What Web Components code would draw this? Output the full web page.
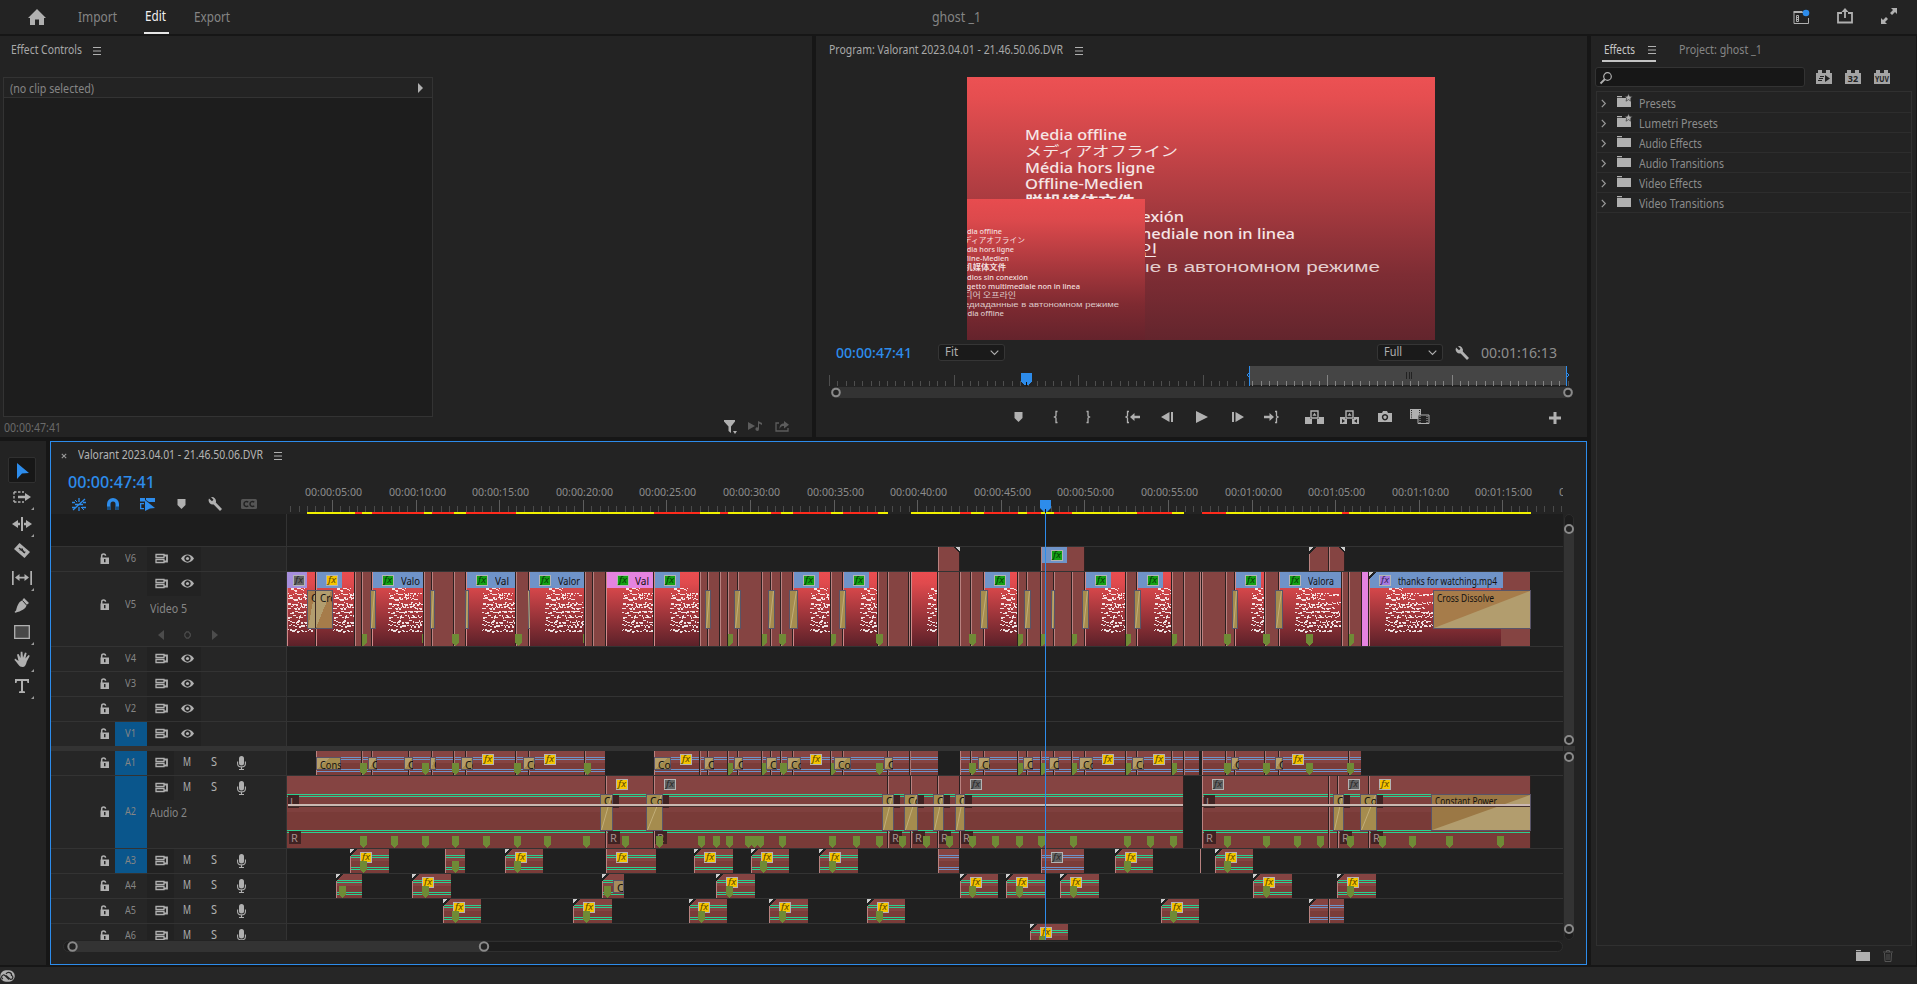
<!DOCTYPE html>
<html lang="en">
<head>
<meta charset="utf-8">
<title>ghost _1</title>
<style>
html,body{margin:0;height:100%;background:#161616;overflow:hidden}
body{font-family:"Noto Sans","Noto Sans CJK JP",sans-serif;color:#a8a8a8;font-size:12px}
</style>
</head>
<body>
<editor-app></editor-app>
<script>
const FONT = '"Noto Sans","Noto Sans CJK JP",sans-serif';
const BASE = '<style>*{box-sizing:border-box}:host{display:block}.bar{display:flex;align-items:center}svg{display:block;flex:none}</style>';
function define(name, render, after) {
  customElements.define(name, class extends HTMLElement {
    connectedCallback() {
      if (this.shadowRoot) return;
      this.attachShadow({mode: 'open'}).innerHTML = BASE + render(this);
      if (after) after(this);
    }
  });
}

/* ---- label: one line of text condensed to a set width ---- */
define('ui-text', el => `<style>:host{flex:none;height:1.4em;line-height:1.4em;width:${el.getAttribute('w')}px;font-size:${el.getAttribute('size') || 12}px}
span{display:inline-block;white-space:pre;transform-origin:0 50%}</style><span><slot></slot></span>`,
  el => {
    const s = el.shadowRoot.querySelector('span');
    const w = s.getBoundingClientRect().width;
    if (w) s.style.transform = `scaleX(${(+el.getAttribute('w') / w).toFixed(4)})`;
  });
const T = (w, size, txt, color) => `<ui-text w="${w}" size="${size}"${color ? ` style="color:${color}${color === '#2d8ceb' ? ';font-weight:500' : ''}"` : ''}>${txt}</ui-text>`;

/* ---- icons ---- */
const C = '#b0b0b0', B = '#2d8ceb';
const film = '<path d="M1 1.500h8v3H1zM1 6.500h8v3H1z" fill="none" stroke="#b0b0b0" stroke-width="1.300"/><path d="M9 2.500h3v6H9" fill="none" stroke="#b0b0b0" stroke-width="1.800"/>';
const folder = '<path d="M0 1h5v1.200H0zM0 3h14v9H0z"/>';
const brick = t => `<path d="M0 3h2V0h4v3h4V0h4v3h2v11H0z" fill="#a4a4a4"/>${t}`;
const icons = {
  home: [18, 16, '<path d="M9 0 18 9h-2v7h-5v-5.500H7V16H2V9H0z"/>'],
  menu: [9, 8, '<path d="M0 .5h8M0 4h8M0 7.500h8" stroke="#b0b0b0"/>'],
  workspace: [18, 16, '<path d="M1 3.500v11h14.500V9M1 3.500h9" fill="none" stroke="#b0b0b0"/><path d="M.5 2h9v2h-9z"/><path d="M3.500 6.500h2v6h-2z" fill="none" stroke="#b0b0b0"/><path d="M4 8.500h2M4 10.500h2" stroke="#b0b0b0"/><circle cx="13" cy="4" r="3.300" fill="#2d8ceb"/>'],
  share: [16, 16, '<path d="M5 5H1v9.500h14V5h-4" fill="none" stroke="#b0b0b0" stroke-width="1.800"/><path d="M8 10V3" stroke="#b0b0b0" stroke-width="1.800"/><path d="m8 0 3.500 4h-7z"/>'],
  expand: [16, 16, '<path d="M10 0h6v6l-2-2-3 3-2-2 3-3zM0 10l2 2 3-3 2 2-3 3 2 2H0z"/>'],
  right: [5, 10, '<path d="m0 0 5 5-5 5z"/>'],
  filter: [13, 14, '<path d="M0 0h11v1.500L7 6.500V13L4.500 11V6.500L0 1.500z"/><path d="m9 11 4 0-2 3z"/>'],
  playnote: [16, 12, '<path d="m0 2 7 4-7 4z" fill="#5c5c5c"/><path d="M10 9V1l4 2v2l-3-1.500V9a1.800 1.800 0 1 1-1-1.500" fill="#5c5c5c"/>'],
  exportclip: [15, 12, '<path d="M4 3H1v8h12V8" fill="none" stroke="#5c5c5c" stroke-width="1.300"/><path d="M4.500 9C4.500 5 6 3.500 9 3.500V1l5 3.800-5 3.700V6C7 6 5.500 6.500 4.500 9z" fill="#5c5c5c"/>'],
  caret: [9, 5, '<path d="m.7.700 3.800 3.800L8.300.7" fill="none" stroke="#b0b0b0" stroke-width="1.100"/>'],
  wrench: [14, 14, '<path d="M1 1.500 4 4.200l1.500-1.500L3 0a4.300 4.300 0 0 1 4.800 5.500L14 12l-2 2-6.300-6.500A4.300 4.300 0 0 1 1 1.500z"/>'],
  marker: [9, 10, '<path d="M.5 0h8v6l-4 4-4-4z"/>'],
  inb: [5, 12, '<path d="M4.500.5H3V5L1.500 6 3 7v4.500h1.500" fill="none" stroke="#b0b0b0" stroke-width="1.300"/>'],
  outb: [5, 12, '<path d="M.5.500H2V5l1.500 1L2 7v4.500H.5" fill="none" stroke="#b0b0b0" stroke-width="1.300"/>'],
  goin: [15, 12, '<path d="M4 .5H2.500V5L1 6l1.500 1v4.500H4" fill="none" stroke="#b0b0b0" stroke-width="1.300"/><path d="m5 6 4.500-4v2.800H15v2.400H9.500V10z"/>'],
  goout: [15, 12, '<path d="M11 .5h1.500V5L14 6l-1.500 1v4.500H11" fill="none" stroke="#b0b0b0" stroke-width="1.300"/><path d="M10 6 5.500 2v2.800H0v2.400h5.500V10z"/>'],
  back: [12, 10, '<path d="M8.500 0v10L0 5zM10 0h2v10h-2z"/>'],
  play: [12, 12, '<path d="m0 0 12 6-12 6z"/>'],
  fwd: [12, 10, '<path d="M3.500 0v10L12 5zM0 0h2v10H0z"/>'],
  lift: [19, 14, '<path d="M0 7h5v2h2v5H0zM19 7h-5v2h-2v5h7z"/><path d="M6 1h7v7H6z" fill="none" stroke="#b0b0b0" stroke-width="1.400"/><path d="m9.500 2.800 2 3h-4z"/>'],
  extract: [19, 14, '<path d="M0 7h5v2h2v5H0zM19 7h-5v2h-2v5h7z"/><path d="M6 1h7v7H6z" fill="none" stroke="#b0b0b0" stroke-width="1.400"/><path d="m9.500 2.800 2 3h-4z"/><path d="M2 9v4l3-2zM17 9v4l-3-2z" fill="#232323"/>'],
  camera: [14, 11, '<path fill-rule="evenodd" d="M0 2h4l1-2h4l1 2h4v9H0zM7 3a3.200 3.200 0 1 0 .01 0zm0 1.500a1.700 1.700 0 1 1-.01 0z"/>'],
  compare: [20, 15, '<path d="M0 0h11v10H0z"/><path d="M1.500 1v9M9.500 1v9" stroke="#232323" stroke-dasharray="1 1.200"/><path d="M8 6h11v8.500H8z" fill="#232323" stroke="#b0b0b0"/><path d="M10 7v7M17 7v7" stroke="#b0b0b0" stroke-dasharray="1 1"/>'],
  plus: [12, 12, '<path d="M4.500 0h3v4.500H12v3H7.500V12h-3V7.500H0v-3h4.500z"/>'],
  search: [12, 12, '<circle cx="7.500" cy="4.500" r="3.800" fill="none" stroke="#b0b0b0" stroke-width="1.200"/><path d="m5 7-4.500 4.500" stroke="#b0b0b0" stroke-width="1.800"/>'],
  b1: [16, 14, brick('<path d="m9 5 5 3.500L9 12z" fill="#222"/><path d="M4 6.500h4M3 8.500h4M2 10.500h4" stroke="#222"/>')],
  b2: [16, 14, brick(`<text x="8" y="12" font-size="9" font-weight="700" fill="#222" text-anchor="middle">32</text>`)],
  b3: [16, 14, brick(`<text x="8" y="11.800" font-size="8" font-weight="700" fill="#222" textLength="14" lengthAdjust="spacingAndGlyphs" text-anchor="middle">YUV</text>`)],
  chev: [5, 9, '<path d="m.8.800 3.500 3.700L.8 8.200" fill="none" stroke="#999" stroke-width="1.200"/>'],
  folder: [15, 13, folder],
  preset: [15, 13, folder + '<path d="m11.500-1.500 1.100 2.700 2.900.2-2.200 1.900.7 2.900-2.500-1.600-2.500 1.600.7-2.900-2.200-1.900 2.900-.2z" stroke="#232323" stroke-width=".6"/>'],
  trash: [10, 12, '<path d="M0 2h10M3.500 2V.5h3V2M1.500 3l.5 8.500h6L8.500 3M4 4v6M6 4v6" fill="none" stroke="#555"/>'],
  select: [12, 16, '<path d="m0 0 12 10-7 .5L0 16z" fill="#2d8ceb"/>'],
  trackfwd: [18, 12, '<path d="M1 1h10M1 11h10M1 1v10" fill="none" stroke="#b0b0b0" stroke-width="1.400" stroke-dasharray="2.500 1.500"/><path d="M5 4.800h7V2l6 4-6 4V7.200H5z"/>'],
  ripple: [20, 14, '<path d="M9 0h2v14H9zM0 7l6-4v2.800h2v2.400H6V11zM20 7l-6-4v2.800h-2v2.400h2V11z"/>'],
  razor: [16, 15, '<path d="m5.500 0 10.500 9-5.500 6L0 6z"/><path d="m5 5 6 5" stroke="#232323" stroke-width="1.500"/><path d="m6 7.500 2-2 2 4 1-1" stroke="#232323" fill="none"/>'],
  slip: [20, 14, '<path d="M0 0h1.700v14H0zM18.300 0H20v14h-1.700zM3 6.500 7.500 3v2.700h5V3L17 6.500 12.500 10V7.500h-5V10z"/>'],
  pen: [16, 16, '<path d="m10 1 5 5-2.500 2C12 12 7 14 1.500 15.800L.5 15l5-5A1.200 1.200 0 1 1 6.500 11l-5 5C3 9 4.500 5 8 3.500z"/><path d="m8.500 3.500 4 4.500" stroke="#232323"/>'],
  rect: [16, 14, '<path d="M.7.700h14.600v12.600H.7z" fill="#484848" stroke="#b0b0b0" stroke-width="1.300"/>'],
  hand: [16, 16, '<path d="M1 7.500 4.500 10 3 3.500l1.600-.5L6.500 7 6.700.8h1.700L9 6.800l2-5.300 1.600.5-1.200 5.600L14.500 4l1.300.8-3 5.700C12 14 11 16 8.500 16 5 16 4 12.500.5 9z"/>'],
  type: [14, 14, '<path d="M0 0h14v4h-1.500L12 2H8v10l2 .5V14H4v-1.500l2-.5V2H2l-.5 2H0z"/>'],
  corner: [3, 3, '<path d="M3 0v3H0z" fill="#999"/>'],
  x: [6, 6, '<path d="m.8.800 4.400 4.400m0-4.400L.8 5.200" stroke="#999" stroke-width="1.100"/>'],
  nest: [14, 13, '<path d="M7 0v4M7 9v4M0 4.500h3M11 4.500h3M0 9.500h4M10 9.500h4M1 12 13 1M3 6.500h8" stroke="#2d8ceb" stroke-width="1.300"/><path d="m3 2 2 2M9 9l3 3" stroke="#2d8ceb"/>'],
  magnet: [12, 12, '<path d="M0 12V6a6 6 0 0 1 12 0v6H8.500V6a2.500 2.500 0 0 0-5 0v6z" fill="#2d8ceb"/><path d="M0 8.500h3.500V12H0zM8.500 8.500H12V12H8.500z" fill="#195083"/>'],
  linked: [15, 13, '<path d="M0 0h5v3.500H0zM6 0h9v4H9L6 2zM0 5h4v1.300H1.300V10H4v1.300H0zM5 2l10 8-5 .5L5 13z" fill="#2d8ceb"/>'],
  cc: [16, 10, '<rect width="16" height="10" rx="1.500" fill="#555"/><path d="M7.200 3.300C6 2 3 2.300 3 5s3 3 4.200 1.700M13.200 3.300C12 2 9 2.300 9 5s3 3 4.200 1.700" fill="none" stroke="#222" stroke-width="1.500"/>'],
  lock: [9, 11, '<path fill-rule="evenodd" d="M.5 4.500H9V11H.5zM4 6h1.500v3.200H4z"/><path d="M1.700 5V2.700C1.700.3 5.500.3 5.500 2.700" fill="none" stroke="#b0b0b0" stroke-width="1.500"/>'],
  sync: [13, 11, film],
  eye: [13, 9, '<path fill-rule="evenodd" d="M0 4.500C3-1 10-1 13 4.500 10 10 3 10 0 4.500zM6.500 1.300a3.200 3.200 0 1 0 .01 0z"/><circle cx="6.500" cy="4.500" r="1.600"/>'],
  mic: [9, 14, '<rect x="2" width="5" height="9.500" rx="2.500"/><path d="M.6 5.500v2.200c0 4.200 7.800 4.200 7.800 0V5.500M4.500 11v3M2 13.500h5" fill="none" stroke="#b0b0b0" stroke-width="1.100"/>'],
  prevk: [6, 10, '<path d="M6 0v10L0 5z" fill="#4c4c4c"/>'],
  nextk: [6, 10, '<path d="M0 0v10l6-5z" fill="#4c4c4c"/>'],
  key: [7, 8, '<path d="M2.500.8h2L6.300 3v2L4.500 7.200h-2L.8 5V3z" fill="none" stroke="#4c4c4c" stroke-width="1.200"/>'],
  cloud: [15, 12, '<rect x=".3" y=".3" width="14.400" height="11.400" rx="5.500" fill="#b0b0b0"/><path d="M3 9C0 7.500 2.500 3.500 5 5.500l4 4M6 4c2-3 6-1 5.500 1.500 2 .3 2 4-1 4L6 5.500" fill="none" stroke="#262626" stroke-width="1.200"/>'],
};
define('ui-icon', el => {
  const [w, h, c] = icons[el.getAttribute('name')];
  return `<style>:host{flex:none;width:${w}px;height:${h}px}svg{overflow:visible;fill:${C};font-family:"Noto Sans",sans-serif}</style><svg width="${w}" height="${h}" viewBox="0 0 ${w} ${h}">${c}</svg>`;
});
const I = n => `<ui-icon name="${n}"></ui-icon>`;
/* a flex row: each item is [x, width, html], spaced by margins from the row's origin */
const bar = (origin, h, items, style = '') => {
  let at = origin;
  return `<div class="bar" style="height:${h}px;${style}">` + items.map(([x, w, html, st]) => {
    const m = x - at; at = x + w;
    return `<div style="flex:none;width:${w}px;margin-left:${m}px;${st || ''}">${html}</div>`;
  }).join('') + '</div>';
};

/* ---- top bar ---- */
define('top-bar', () => `<style>:host{background:#232323;height:34px}</style>` + bar(0, 34, [
  [28, 18, I('home')], [78, 39, T(39, 14, 'Import', '#858585'), 'padding-bottom:1px'],
  [144, 25, `<div style="padding:6px 0 0 1px;height:34px;border-bottom:2px solid #e6e6e6">${T(21, 14, 'Edit', '#f0f0f0')}</div>`],
  [194, 36, T(36, 14, 'Export', '#858585'), 'padding-bottom:1px'], [932, 49, T(49, 14, 'ghost _1', '#858585'), 'padding-bottom:1px'],
  [1793, 18, I('workspace')], [1837, 16, I('share'), 'margin-top:-3px'], [1881, 16, I('expand'), 'margin-top:-3px']]));

/* ---- effect controls ---- */
define('effect-controls', () => `<style>:host{background:#232323}
.box{margin:15px 0 0 3px;width:430px;height:340px;border:1px solid #333;background:#1d1d1d}</style>` +
  bar(0, 26, [[11, 71, T(71, 12, 'Effect Controls')], [93, 9, I('menu')]], 'padding-top:3px') +
  `<div class="box">${bar(4, 20, [[10, 84, T(84, 12, '(no clip selected)', '#858585'), 'padding-top:3px'], [418, 5, I('right')]], 'background:#232323;border-bottom:1px solid #333')}</div>` +
  bar(0, 20, [[4, 57, T(57, 12, '00:00:47:41', '#6a6a6a'), 'padding-top:2px'], [724, 13, I('filter')], [748, 16, I('playnote'), 'margin-top:-2px'], [775, 15, I('exportclip'), 'margin-top:-2px']]));

/* ---- program monitor ---- */
const lines = ['Media offline', 'メディアオフライン', 'Média hors ligne', 'Offline-Medien', '脱机媒体文件', 'Medios sin conexión', 'Oggetto multimediale non in linea', '미디어 오프라인', 'Медиаданные в автономном режиме'];
const st = (x, y, w, size, t, fill, extra = '') => `<text x="${x}" y="${y}" font-size="${size}" fill="${fill}" textLength="${w}" lengthAdjust="spacingAndGlyphs" ${extra}>${t}</text>`;
define('offline-frame', () => {
  const big = [102, 153, 130, 118, 110, 159, 270, 133, 355], small = [46, 69, 58, 53, 50, 72, 124, 60, 163];
  const fam = i => i === 4 ? 'font-family="Noto Sans CJK SC" font-weight="700"' : i === 7 ? 'font-family="Noto Sans CJK KR"' : i === 8 ? 'font-family="Liberation Sans"' : i === 1 ? 'font-family="Noto Sans CJK JP"' : 'font-weight="500"';
  return `<style>:host{width:468px;height:263px}svg{font-family:${FONT}}</style><svg width="468" height="263" viewBox="967 77 468 263">
<defs><linearGradient id="a" x2="0" y2="1"><stop stop-color="#ec5153"/><stop offset=".08" stop-color="#e54e50"/><stop offset=".75" stop-color="#7e2d34"/><stop offset="1" stop-color="#63252d"/></linearGradient>
<linearGradient id="b" x2="0" y2="1"><stop stop-color="#e74c4f"/><stop offset=".15" stop-color="#dc494c"/><stop offset=".75" stop-color="#7e2a31"/><stop offset="1" stop-color="#64232c"/></linearGradient></defs>
<path d="M967 77h468v263H967z" fill="url(#a)"/>` +
    lines.map((t, i) => st(1025, 140 + i * 16.45 - (i === 1 ? .8 : 0), big[i], i === 8 ? 14 : 13.8, t, i === 8 ? '#e4cfcf' : '#f6e6e6', fam(i))).join('') +
    `<path d="M967 199h178v141H967z" fill="url(#b)"/>` +
    [...lines, 'Media offline'].map((t, i) => st(956, 234 + i * 9.1, i === 9 ? 48 : small[i], 7.5, t, i > 6 ? '#dcc6c6' : '#f3dede', fam(i))).join('') + '</svg>';
});
define('program-ruler', () => {
  let s = '';
  for (let i = 0; i <= 89; i++) {
    const x = Math.round(829 + i * 8.3), r = x > 1249 && x < 1566, m = i % 15 === 0;
    s += `<path d="M${x} ${m ? 375 : 381}h1V386h-1z" fill="${r ? '#838383' : '#4e4e4e'}"/>`;
  }
  return `<style>:host{height:33px}</style><svg width="771" height="33" viewBox="816 366 771 33" shape-rendering="crispEdges">
<path d="M1249 366h318v19h-318z" fill="#454545"/>${s}<path d="M1249 366h1v20h-1zM1566 366h1v20h-1z" fill="${B}"/>
<path d="M1406 372h1v7h-1zM1408.500 372h1v7h-1zM1411 372h1v7h-1z" fill="#222"/>
<path d="m1249 373-2 2 2 2M1567 373l2 2-2 2" stroke="${B}" fill="none" shape-rendering="auto"/>
<path d="M1021 373h11v9l-4 3h-3l-4-3z" fill="${B}"/><path d="M1026 382h1v4h-1z" fill="#111"/>
<rect x="831" y="387" width="742" height="11" rx="5" fill="#333"/>
<g shape-rendering="auto" fill="#232323" stroke="#8a8a8a" stroke-width="2"><circle cx="836" cy="392.500" r="3.800"/><circle cx="1568" cy="392.500" r="3.800"/></g></svg>`;
});
define('drop-down', el => `<style>:host{width:${el.getAttribute('w')}px;height:17px;border:1px solid #353535;border-radius:3px;background:#1a1a1a;display:flex;align-items:center;padding:0 5px 0 6px;justify-content:space-between;color:#b0b0b0}</style>${T(el.getAttribute('tw'), 12, '<slot></slot>')}${I('caret')}`);
define('program-monitor', () => `<style>:host{background:#232323}offline-frame{margin:15px 0 4px 151px}</style>` +
  bar(816, 26, [[829, 234, T(234, 12, 'Program: Valorant 2023.04.01 - 21.46.50.06.DVR')], [1075, 9, I('menu')]], 'padding-top:3px') +
  '<offline-frame></offline-frame>' +
  bar(816, 17, [[836, 76, T(76, 14, '00:00:47:41', B)], [938, 67, '<drop-down w="67" tw="13">Fit</drop-down>'], [1377, 66, '<drop-down w="66" tw="18">Full</drop-down>'], [1455, 14, I('wrench')], [1481, 76, T(76, 14, '00:01:16:13', '#8e8e8e')]], 'margin-bottom:5px') +
  '<program-ruler></program-ruler>' +
  bar(816, 35, [[1014, 9, I('marker')], [1053, 5, I('inb')], [1086, 5, I('outb')], [1125, 15, I('goin')], [1161, 12, I('back')], [1196, 12, I('play')], [1232, 12, I('fwd')], [1264, 15, I('goout')], [1305, 19, I('lift')], [1340, 19, I('extract')], [1378, 14, I('camera')], [1410, 20, I('compare')], [1549, 12, I('plus'), 'padding-top:3px']]));

/* ---- effects browser ---- */
define('effect-row', el => `<style>:host{height:20px;border-bottom:1px solid #2d2d2d;color:#8c8c8c}</style>` +
  bar(1597, 20, [[1601, 5, I('chev')], [1617, 15, I(el.hasAttribute('preset') ? 'preset' : 'folder'), 'margin-top:-3px'], [1639, +el.getAttribute('w'), T(el.getAttribute('w'), 12, '<slot></slot>'), 'padding-top:2px']]));
define('effects-panel', () => `<style>:host{background:#232323;width:325px}
.search{height:20px;background:#171717;border:1px solid #333;border-radius:3px;padding:4px}
.list{margin:4px 0 0 5px;width:316px;height:855px;border:1px solid #303030;padding-top:1px}</style>` +
  bar(1591, 26, [[1602, 54, `<div class="bar" style="height:26px;border-bottom:2px solid #c4c4c4;padding:4px 0 0 2px">${T(31, 12, 'Effects', '#c8c8c8')}<span style="margin-left:13px">${I('menu')}</span></div>`], [1679, 83, T(83, 12, 'Project: ghost _1', '#858585'), 'padding-top:3px']]) +
  bar(1591, 20, [[1595, 210, `<div class="search">${I('search')}</div>`], [1816, 16, I('b1')], [1845, 16, I('b2')], [1874, 16, I('b3')]], 'margin-top:5px') +
  `<div class="list"><effect-row preset w="37">Presets</effect-row><effect-row preset w="79">Lumetri Presets</effect-row><effect-row w="63">Audio Effects</effect-row><effect-row w="85">Audio Transitions</effect-row><effect-row w="63">Video Effects</effect-row><effect-row w="85">Video Transitions</effect-row></div>` +
  bar(1591, 19, [[1856, 15, I('folder')], [1883, 10, I('trash')]]));

/* ---- tools ---- */
define('tool-panel', () => `<style>:host{background:#232323;padding-top:16px}.t{width:28px;height:27px;margin-left:8px;display:grid;place-items:center;position:relative}
.t.on{height:26px;background:#171717;border:1px solid #303030;border-radius:2px;padding:1px 0 0 2px}.t ui-icon[name=corner]{position:absolute;right:2px;bottom:0}</style>` +
  [['select'], ['trackfwd', 1], ['ripple', 1], ['razor'], ['slip', 1], ['pen'], ['rect', 1], ['hand', 1], ['type', 1]].map(([n, c], i) =>
    `<div class="t${i ? '' : ' on'}">${I(n)}${c ? I('corner') : ''}</div>`).join(''));

/* ---- track headers ---- */
define('track-head', el => {
  const n = el.getAttribute('n'), h = +el.getAttribute('h'), a = n[0] === 'A', tall = h > 60, on = el.hasAttribute('on');
  const cell = 'height:24px;display:grid;place-items:center;padding-bottom:1px;';
  const btn = cell + 'background:#222';
  const items = a ? [[147, 27, I('sync'), btn + ';padding-left:1px'], [174, 27, T(8, 12, 'M', '#b0b0b0'), cell + 'padding-right:1px'], [201, 27, T(6, 12, 'S', '#b0b0b0'), cell + 'padding-right:1px'], [228, 27, I('mic'), cell]]
    : [[147, 27, I('sync'), btn + ';padding-left:1px'], [174, 27, I('eye'), btn]];
  return `<style>:host{height:${h}px;background:#262626;border-top:${n === 'A1' ? 0 : 1}px solid #333;overflow:hidden;display:grid;grid-template-columns:50px 14px 32px 1fr}
.c{height:${tall ? h - 1 : 24}px;display:grid;place-items:center start;padding-bottom:${n === 'V5' ? 10 : 2}px}.c ui-icon{margin-left:-1px}.n{place-items:center;background:${on ? '#0a568c' : 'none'}}</style>
<div class="c"></div><div class="c">${I('lock')}</div><div class="c n" style="padding-right:2px">${T(11, 11, n, '#858585')}</div><div>${bar(147, 24, items)}
${tall ? `<div style="padding:5px 0 0 3px">${T(37, 12, a ? 'Audio 2' : 'Video 5', '#858585')}</div>` : ''}
${n === 'V5' ? bar(147, 16, [[158, 6, I('prevk')], [184, 7, I('key')], [212, 6, I('nextk')]], 'margin-top:9px') : ''}</div>`;
});

/* ---- timeline drawing ---- */
const GR = '#2bd090', BL = '#6f93c8', PINK = '#e583e0', MK = '#6f8a36';
const R = (x, y, w, h, f, e = '') => `<rect x="${x}" y="${y}" width="${w}" height="${h}" fill="${f}" ${e}/>`;
const txt = (x, y, t, w, clipW, f = '#111') => `<svg x="${x}" y="${y - 12}" width="${clipW || w + 1}" height="16" overflow="hidden"><text x="0" y="12" font-size="11.500" fill="${f}"${w ? ` textLength="${w}" lengthAdjust="spacingAndGlyphs"` : ''}>${t}</text></svg>`;
const fx = (x, y, k) => {
  const f = {g: '#14a014', y: '#f5c400', k: '#646464', p: '#a57ae0'}[k], d = {g: '#063a06', y: '#5a4600', k: '#2a2a2a', p: '#3a2560'}[k];
  return R(x, y, 12, 11, '#b4b4b4') + R(x + 1, y + 1, 10, 9, f) + `<text x="${x + 2}" y="${y + 8.300}" font-size="9.500" font-style="italic" fill="${d}" textLength="8" lengthAdjust="spacingAndGlyphs">fx</text>`;
};
const mk = (x, y, w = 7) => w < 7 ? `<path d="M${x} ${y}h${w}v8l-${w - 1} 4h-1z" fill="${MK}"/>` : `<path d="M${x} ${y}h7v8l-3 4h-1l-3-4z" fill="${MK}"/>`;
const notch = (x, y, side) => side === 'l' ? `<path d="M${x} ${y}h7l-7 7z" fill="#202020"/><path d="M${x} ${y}h4.500L${x} ${y + 4.500}z" fill="#ccc"/>`
  : `<path d="M${x} ${y}h-7l7 7z" fill="#202020"/><path d="M${x} ${y}h-4.500L${x} ${y + 4.500}z" fill="#ccc"/>`;
function tracksvg(y0, h, body, line = 1) {
  return `<style>:host{height:${h}px}svg{font-family:${FONT}}</style><svg width="1276" height="${h}" viewBox="287 ${y0} 1276 ${h}" shape-rendering="crispEdges" overflow="hidden">
<defs><linearGradient id="m" x2="0" y2="1"><stop stop-color="#ea4d50"/><stop offset=".15" stop-color="#e04a4d"/><stop offset="1" stop-color="#5c2129"/></linearGradient></defs>
${R(287, y0, 1276, h, '#202020')}${line ? R(287, y0, 1276, 1, '#333') : ''}${body}</svg>`;
}
/* thumbnail speckle, a seeded set of short dashes in ten rows */
function speckle(x0, x1, xs) {
  let seed = 7, d = '';
  const rnd = () => (seed = (seed * 16807) % 2147483647) / 2147483647;
  [18, 50, 30, 48, 40, 60, 100, 46, 112, 36].forEach((len, r) => {
    const y = 588 + Math.round(r * 4.5);
    let x = xs + Math.floor(rnd() * 2) + (r ? 0 : 4);
    while (x < xs + len) {
      const w = 1 + Math.floor(rnd() * 2.2), dy = Math.floor(rnd() * 3), hh = rnd() < .3 ? 2 : 1;
      if (x >= x0 && x + w <= x1) d += `M${x} ${y + dy}h${w}v${hh}h-${w}z`;
      x += w;
      if (rnd() < .35) x += 1;
      if (rnd() < .3) x -= 1;
    }
  });
  return `<path d="${d}" fill="#fff" opacity=".85"/>`;
}
const plain = (x0, x1, y, h) => R(x0, y, x1 - x0, h, '#854442') + R(x0, y, 1, h, '#b98280') + R(x1 - 1, y, 1, h, '#2c2020');
const trans = (x0, x1, y, h, label, w) => R(x0, y, x1 - x0, h, '#595468') + R(x0 + 1, y + 1, x1 - x0 - 2, h - 2, '#a58c4e') +
  `<path d="M${x0 + 1.500} ${y + h - 1}L${x1 - 1.500} ${y + 1}" stroke="#c2ae78" stroke-width="1" shape-rendering="auto"/>` + (label ? txt(x0 + 4, y + 10.500, label, w, x1 - x0 - 5) : '');

const plains5 = [[355,362],[362,372],[424,432],[432,454],[454,466],[516,529],[585,593],[593,606],[700,708],[708,720],[720,728],[728,738],[738,762],[762,771],[771,781],[781,793],[831,843],[878,888],[888,909],[909,911],[938,960],[960,971],[971,984],[1018,1027],[1027,1041],[1041,1054],[1054,1072],[1072,1085],[1126,1137],[1172,1184],[1184,1200],[1200,1202],[1202,1226],[1226,1235],[1265,1279],[1342,1349],[1349,1362]];
const media5 = [[287,316,287,'#a68fdc',308,293,'k'],[316,355,333,BL,342,326,'y'],[372,424,388,BL,423,382,'g','Valo',401,19],[466,516,482,BL,515,476,'g','Val',495,14],[529,585,545,BL,584,539,'g','Valor',558,22],[606,654,622,PINK,653,617,'g','Val',635,14],[654,700,670,BL,680,664,'g'],[793,831,810,BL,819,803,'g'],[843,878,860,BL,869,853,'g'],[911,938,927],[984,1018,1000,BL,1010,994,'g'],[1085,1126,1101,BL,1111,1095,'g'],[1137,1172,1154,BL,1163,1147,'g'],[1235,1265,1251,BL,1261,1245,'g'],[1279,1342,1295,BL,1341,1289,'g','Valora',1308,26]];
define('track-v6', () => tracksvg(546, 25, plain(938, 960, 547, 24) + notch(960, 547, 'r') + plain(1041, 1085, 547, 24) + R(1042, 547, 25, 16, BL) + fx(1051, 550, 'g') +
  plain(1309, 1329, 547, 24) + notch(1309, 547, 'l') + plain(1329, 1345, 547, 24) + notch(1345, 547, 'r')));
define('track-v5', () => {
  const y = 572, h = 74;
  let s = plains5.map(p => plain(p[0], p[1], y, h)).join('');
  s += media5.map(([a, b, xs, col, hx, f, k, l, lx, lw]) => R(a, y, b - a, h, 'url(#m)') + speckle(a + 1, b - 1, xs) + R(a, y, 1, h, '#cf8a8a') + R(b - 1, y, 1, h, '#2c2020') +
    (col ? R(a + (a > 287 ? 1 : 0), y, hx - a - 1, 16, col) + fx(f, 575, k) : '') + (l ? txt(lx, 585, l, lw) : '')).join('');
  s += R(1362, y, 7, h, PINK) + R(1368, y, 1, h, '#2c2020');
  s += R(1369, y, 132, h, 'url(#m)') + R(1501, y, 29, h, '#854442') + speckle(1370, 1500, 1385) + R(1369, y, 1, h, '#cf8a8a') + R(1370, y, 133, 16, BL) + notch(1369, y, 'l') + fx(1379, 575, 'p') + txt(1398, 585, 'thanks for watching.mp4', 99);
  const big = (x0, x1) => R(x0, 590, x1 - x0, 39, '#595468') + R(x0 + 1, 591, x1 - x0 - 2, 37, '#a67c4a') + `<path d="M${x0 + 1} 628L${x1 - 1} 591V628z" fill="#b29d6e" shape-rendering="auto"/>`;
  s += big(1433, 1531) + txt(1437, 602, 'Cross Dissolve', 57);
  s += R(307, 590, 26, 39, '#595468') + R(308, 591, 24, 37, '#a67c4a') + '<path d="M308 628l7-37v37zM316 628l15-37h-15z" fill="#b29d6e"/>' + R(315, 591, 1, 37, '#3a2a25') + txt(311, 602, 'C', 7, 4) + txt(320, 602, 'Crc', 15, 12);
  s += [[370,376],[430,435],[465,469],[528,530],[705,711],[734,741],[768,775],[789,798],[839,846],[980,988],[1024,1031],[1051,1055],[1082,1089],[1134,1141],[1232,1238],[1275,1283]].map(([a, b]) => trans(a, b, 590, 39)).join('');
  s += [[362,5],[452],[515],[728,5],[762,5],[779],[831,5],[876],[969],[1018,5],[1041,5],[1072,5],[1126,5],[1172,5],[1224],[1263],[1306],[1349,5]].map(([x, w]) => mk(x, 634, w)).join('') + R(422, 634, 1, 9, MK) + R(583, 634, 1, 9, MK);
  return tracksvg(571, 75, s);
});
define('track-empty', el => tracksvg(0, 25, ''));

const aclip = (x0, x1, y, c, h = 24) => R(x0, y, x1 - x0, 12, '#854442') + R(x0, y + 12, x1 - x0, h - 12, '#7a3c39') +
  [6, 8, 18, 20].map(o => R(x0, y + o, x1 - x0, 1, c)).join('') + R(x0, y, 1, h, '#b98280');
define('track-a1', () => {
  const y = 751;
  let s = [[316,605],[654,938],[960,1199],[1202,1361]].map(([a, b]) => aclip(a, b, y, BL)).join('');
  s += [362,372,409,432,454,466,516,529,585,700,708,728,738,762,771,781,793,831,843,888,910,971,984,1018,1027,1041,1054,1072,1085,1126,1137,1172,1184,1226,1235,1265,1279,1349].map(x => R(x - 1, y, 1, 24, '#2c2020') + R(x, y, 1, 24, '#a87674')).join('');
  s += [[360],[422],[452],[514],[584],[728,5],[762,5],[780],[831,5],[876],[969],[1018,5],[1041,5],[1072,5],[1126,5],[1172,5],[1224],[1263],[1306],[1347]].map(([x, w]) => mk(x, 763, w)).join('');
  s += [[316,341,'Const',25],[368,377,'C',7],[404,413,'C',7],[430,436,'C',7],[461,473,'Co',13],[523,535,'Co',13],[654,671,'Con',19],[704,714,'C',7],[734,743,'C',7],[766,777,'Co',13],[787,801,'Co',13],[834,851,'Con',19],[884,893,'C',7],[978,990,'Co',13],[1023,1033,'Co',13],[1049,1059,'Co',13],[1079,1093,'Co',13],[1132,1144,'Co',13],[1231,1239,'C',7],[1275,1283,'C',7]]
    .map(([a, b, l, w]) => R(a, 757, b - a, 13, '#595468') + R(a + 1, 758, b - a - 2, 11, '#a58c4e') + `<path d="M${a + 1} 769L${Math.min(b - 1, a + 14)} 758H${a + 1}z" fill="#b59e6a"/>` + txt(a + 4, 768.500, l, w, b - a - 4)).join('');
  s += [482,544,680,810,1102,1153,1292].map(x => fx(x, 754, 'y')).join('');
  return tracksvg(751, 24, s, 0);
});
define('track-a2', () => {
  const y = 776;
  let s = [[287,606],[606,654],[654,888],[888,911],[911,938],[938,960],[960,1184],[1202,1329],[1329,1338],[1338,1369],[1369,1531]].map(([a, b]) =>
    R(a, y, b - a, 36, '#854442') + R(a, 812, b - a, 36, '#793b38') + R(a, 797, b - a, 15, '#7f403e') +
    [794, 796, 830, 832].map(v => R(a, v, b - a, 1, GR)).join('') + (a > 287 ? R(a, y, 1, 72, '#b98280') : '') + R(b - 1, y, 1, 72, '#2c2020')).join('');
  const box = (x, yy, l, w = 12) => R(x, yy, w, 13, '#3f2323') + (l ? `<text x="${x + 2}" y="${yy + 10.500}" font-size="11" fill="#a58f8d">${l}</text>` : '');
  s += box(288, 795, 'L', 11) + box(1204, 795, 'L', 11) + [612, 662, 893, 917, 943, 965, 1343, 1376].map(x => box(x, 795, '', 7)).join('');
  s += [[289],[608],[655],[890],[913],[939],[961],[1204],[1340],[1371]].map(([x]) => box(x, 831, 'R')).join('');
  s += [[600,613,'Co'],[646,663,'Con'],[882,894,'Co'],[904,918,'Co'],[933,944,'C'],[955,965,'C'],[1333,1344,'C'],[1360,1377,'Con']].map(([a, b, l]) => trans(a, b, 794, 37, l, l.length * 6.5)).join('');
  s += R(1431, 794, 100, 37, '#595468') + R(1432, 795, 98, 35, '#9b7845') + '<path d="M1432 830L1530 795V830z" fill="#b29d6e" shape-rendering="auto"/>' + txt(1435, 805, 'Constant Power', 62);
  s += [[288,1183],[1202,1530]].map(([a, b]) => R(a, 804, b - a, 2, '#cbb8b2') + R(a, 806, b - a, 1, '#43302e')).join('');
  s += fx(616, 779, 'y') + fx(1379, 779, 'y') + [664, 970, 1212, 1348].map(x => fx(x, 779, 'k')).join('');
  s += [360,391,422,452,483,514,544,583,622,656,698,713,726,745,751,757,779,829,853,876,899,923,946,969,992,1016,1038,1070,1124,1147,1170,1224,1263,1294,1317,1347,1379,1409,1446,1497].map(x => mk(x, 836)).join('');
  return tracksvg(775, 73, s);
});
/* short audio clips: [x0, x1, notch, fx x, fx kind, marker x, colour] */
const shorts = {
  A3: [848, 25, [[350,389,1,360,'y',360],[445,465,0,0,'',452],[505,543,1,515,'y',514],[606,656,0,616,'y'],[694,733,1,704,'y'],[751,789,1,761,'y',760],[819,858,1,829,'y',829],[938,959,0,0,'',0,BL],[1041,1084,0,1051,'k',0,BL],[1115,1153,1,1125,'y',1124],[1200,1201,0,0,'',0,BL],[1215,1253,1,1225,'y',1224]]],
  A4: [873, 25, [[336,362,1,0,'',339],[412,451,1,422,'y',422],[602,624,1,0,'',604],[716,755,1,726,'y',726],[960,998,1,970,'y',969],[1006,1045,1,1016,'y',1016],[1060,1099,1,1070,'y',1070],[1253,1292,1,1263,'y',1263],[1337,1376,1,1347,'y',1347]]],
  A5: [898, 25, [[443,481,1,453,'y',452],[573,612,1,583,'y',583],[689,727,1,698,'y',698],[769,808,1,779,'y',779],[867,905,1,877,'y',876],[1161,1199,1,1171,'y',1170],[1309,1328,1,0,'',0,BL],[1329,1344,0,0,'',0,BL]]],
  A6: [923, 17, [[1030,1068,1,1040,'y',1039]]],
};
define('track-short', el => {
  const [y0, h, list] = shorts[el.getAttribute('n')], y = y0 + 1;
  let s = list.map(([a, b, n, f, k, m, c]) => aclip(a, b, y, c || GR) + (n ? notch(a, y, 'l') : '') + (f ? fx(f, y + 3, k) : '') + (m ? mk(m, y + 12) : '')).join('');
  if (y0 === 873) s += R(613, 880, 11, 13, '#595468') + R(614, 881, 9, 11, '#a58c5e') + txt(617, 891.500, 'C', 7, 6);
  return tracksvg(y0, h, s);
});
define('time-ruler', () => {
  let s = '';
  for (let i = -5; i < 148; i++) {
    const x = Math.round(332 + i * 8.36), M = i % 10 === 0;
    if (x > 288 && x < 1563) s += R(x, M ? 500 : 506, 1, M ? 12 : 6, M ? '#5e5e5e' : '#4a4a4a');
  }
  for (let i = 0; i < 15; i++) {
    const t = (i + 1) * 5, l = `00:0${Math.floor(t / 60)}:${String(t % 60).padStart(2, '0')}:00`;
    s += st(Math.round(305 + i * 83.6), 496, 57, 11.5, l, '#8c8c8c');
  }
  s += `<text x="1559" y="496" font-size="11.500" fill="#8c8c8c">0</text>`;
  const seg = [307,'y',355,'r',362,'y',372,'r',424,'y',432,'r',454,'y',466,'r',516,'y',654,'r',700,'y',720,'r',728,'y',771,'r',781,'y',793,'r',831,'y',843,'r',878,'y',888,'',911,'y',960,'r',971,'y',984,'r',1018,'y',1027,'r',1041,'y',1054,'r',1072,'y',1137,'r',1172,'y',1184,'',1202,'r',1226,'y',1342,'r',1349,'y',1531];
  for (let i = 0; i < seg.length - 1; i += 2) if (seg[i + 1]) s += R(seg[i], 512, seg[i + 2] - seg[i], 2, seg[i + 1] === 'y' ? '#f0f000' : '#ff2b1c');
  return `<style>:host{height:38px}svg{font-family:${FONT}}</style><svg width="1276" height="38" viewBox="287 476 1276 38" overflow="hidden" shape-rendering="crispEdges">${s}</svg>`;
});
define('zoom-bar', el => {
  const y0 = +el.getAttribute('y'), h = +el.getAttribute('h'), a = +el.getAttribute('a'), b = +el.getAttribute('b');
  return `<style>:host{height:${h}px}</style><svg width="11" height="${h}" viewBox="1564 ${y0} 11 ${h}"><rect x="1564.500" y="${y0 + .5}" width="9" height="${h - 1}" rx="4.500" fill="#1c1c1c" stroke="#2c2c2c"/>
<rect x="1564" y="${a}" width="10" height="${b - a}" fill="#333"/><g fill="#232323" stroke="#8a8a8a" stroke-width="2"><circle cx="1569" cy="${a}" r="4"/><circle cx="1569" cy="${b}" r="4"/></g></svg>`;
});
define('timeline-panel', () => `<style>:host{background:#232323;border:1px solid ${B};position:relative}
.g{display:grid;grid-template-columns:235px 1px 1276px 1px 11px}.sep{background:#333}.blank{height:32px;background:#1d1d1d}.div{height:5px;background:#333}
.ph{position:absolute;left:988px;top:58px}</style>
<div style="height:34px">${bar(51, 26, [[61, 6, I('x')], [78, 185, T(185, 12, 'Valorant 2023.04.01 - 21.46.50.06.DVR', '#b4b4b4')], [274, 9, I('menu')]], 'padding-top:1px')}</div>
<div class="g" style="height:38px;grid-template-columns:236px 1276px"><div style="margin-top:-6px">${bar(51, 24, [[68, 87, T(87, 16, '00:00:47:41', B)]])}
${bar(51, 20, [[72, 14, I('nest')], [107, 12, I('magnet')], [140, 15, I('linked')], [177, 9, I('marker')], [208, 14, I('wrench')], [241, 16, I('cc')]])}</div><time-ruler></time-ruler></div>
<div class="g"><div><div class="blank"></div>
<track-head n="V6" h="25"></track-head><track-head n="V5" h="75"></track-head><track-head n="V4" h="25"></track-head><track-head n="V3" h="25"></track-head><track-head n="V2" h="25"></track-head><track-head n="V1" h="25" on></track-head>
<div class="div"></div><track-head n="A1" h="24" on></track-head><track-head n="A2" h="73" on></track-head><track-head n="A3" h="25" on></track-head><track-head n="A4" h="25"></track-head><track-head n="A5" h="25"></track-head><track-head n="A6" h="17"></track-head></div>
<div class="sep"></div>
<div><div class="blank"></div><track-v6></track-v6><track-v5></track-v5><track-empty></track-empty><track-empty></track-empty><track-empty></track-empty><track-empty></track-empty>
<div class="div"></div><track-a1></track-a1><track-a2></track-a2><track-short n="A3"></track-short><track-short n="A4"></track-short><track-short n="A5"></track-short><track-short n="A6"></track-short></div>
<div></div><div><zoom-bar y="514" h="232" a="529" b="740"></zoom-bar><div class="div"></div><zoom-bar y="751" h="189" a="757" b="929"></zoom-bar></div></div>
<svg width="1536" height="24" viewBox="51 940 1536 24"><rect x="63.500" y="941.500" width="1499" height="10" rx="5" fill="#1d1d1d" stroke="#2f2f2f"/><path d="M72 941h412v11H72z" fill="#333"/><g fill="#232323" stroke="#8a8a8a" stroke-width="2"><circle cx="72.500" cy="946.500" r="4.200"/><circle cx="484" cy="946.500" r="4.200"/></g></svg>
<svg class="ph" width="13" height="440" viewBox="1039 500 13 440"><path d="M1040 500h11v8l-4 4h-3l-4-4z" fill="${B}"/><path d="M1045 512h1v428h-1z" fill="${B}"/><path d="M1045 509h1v4h-1z" fill="#111"/></svg>`);

define('status-bar', () => `<style>:host{background:#262626;height:17px;padding-top:3px}</style>${I('cloud')}`);
define('editor-app', () => `<style>:host{display:grid;width:1917px;height:984px;grid-template-rows:34px 929px 17px;row-gap:2px;background:#161616;overflow:hidden}
.main{display:grid;grid-template-columns:1587px 325px;column-gap:4px}.left{display:grid;grid-template-rows:401px 524px;row-gap:4px}
.a{display:grid;grid-template-columns:812px 771px;column-gap:4px}.b{display:grid;grid-template-columns:46px 1537px;column-gap:4px}</style>
<top-bar></top-bar><div class="main"><div class="left"><div class="a"><effect-controls></effect-controls><program-monitor></program-monitor></div>
<div class="b"><tool-panel></tool-panel><timeline-panel></timeline-panel></div></div><effects-panel></effects-panel></div><status-bar></status-bar>`);
</script>
</body>
</html>
